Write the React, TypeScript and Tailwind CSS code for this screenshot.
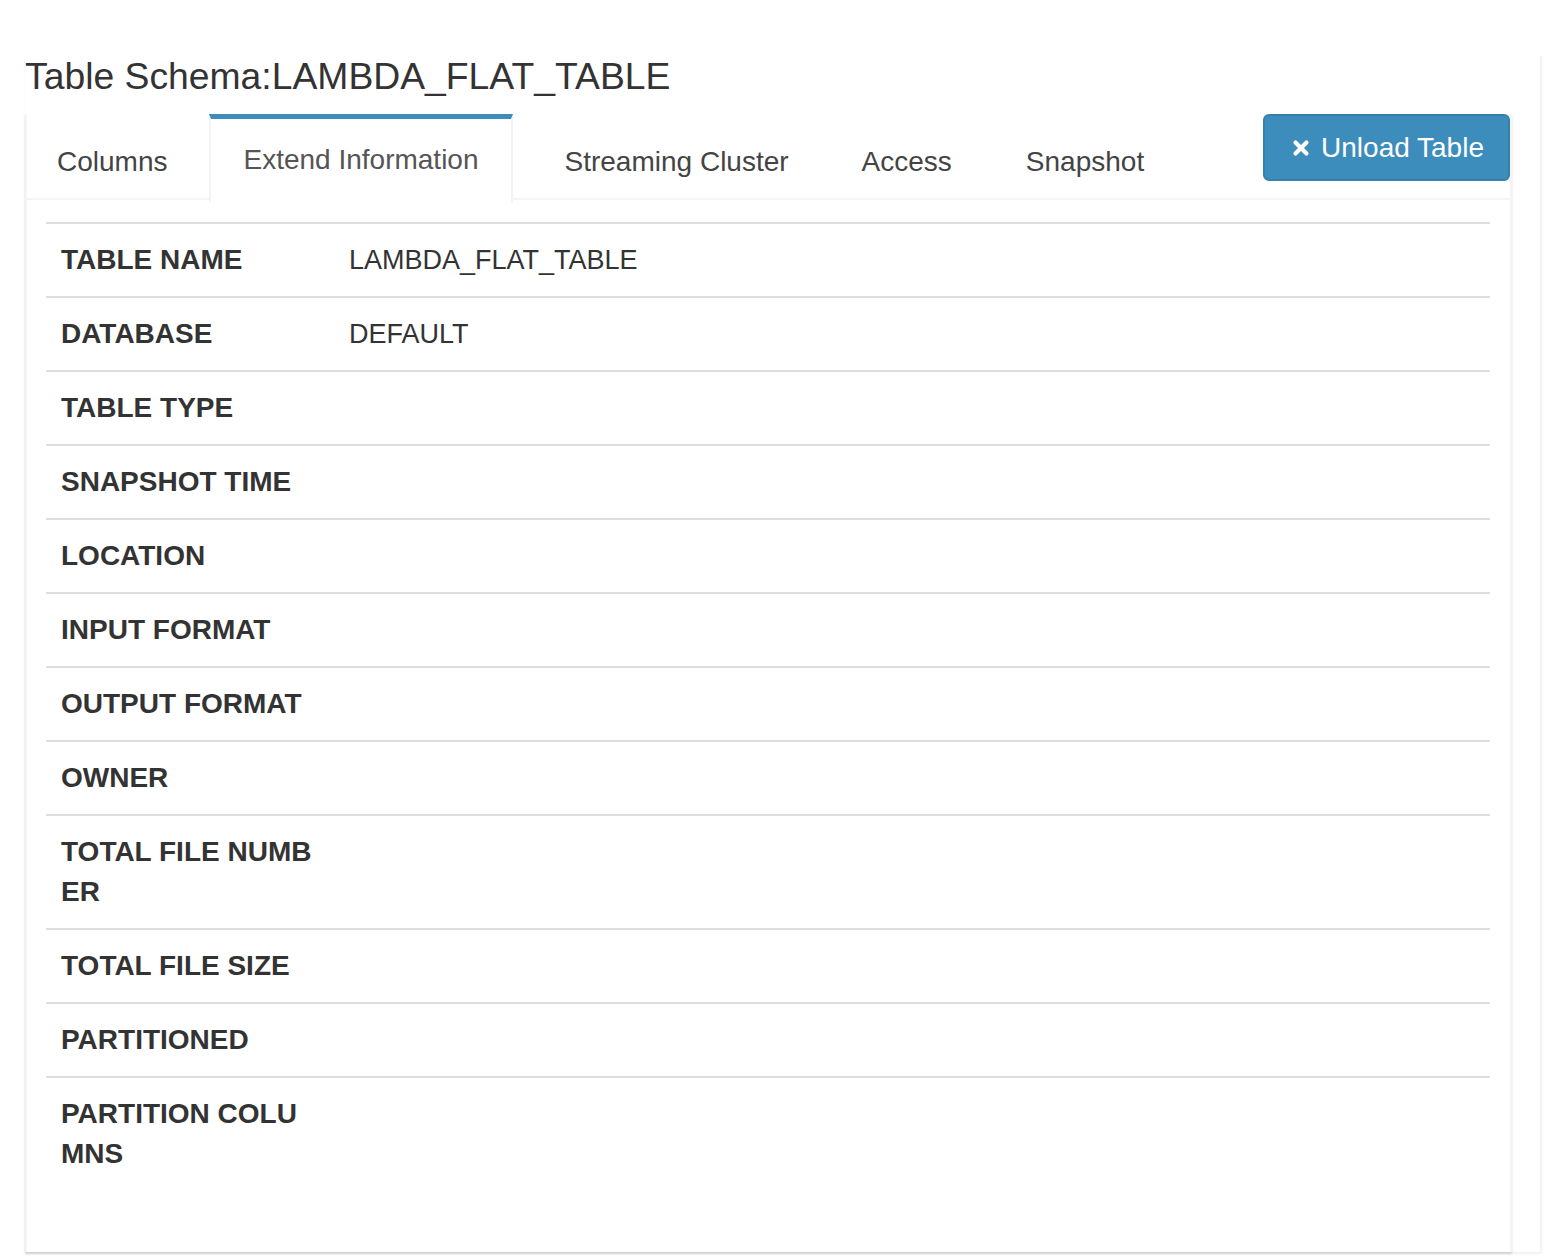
import React from 'react';

const tabs = ['Columns', 'Extend Information', 'Streaming Cluster', 'Access', 'Snapshot'];
const tabGap = ['mr-[12px]', 'mr-[22px]', 'mr-[13px]', 'mr-[14px]', 'mr-[14px]'];

const rows: { label: string; value?: string }[] = [
  { label: 'TABLE NAME', value: 'LAMBDA_FLAT_TABLE' },
  { label: 'DATABASE', value: 'DEFAULT' },
  { label: 'TABLE TYPE' },
  { label: 'SNAPSHOT TIME' },
  { label: 'LOCATION' },
  { label: 'INPUT FORMAT' },
  { label: 'OUTPUT FORMAT' },
  { label: 'OWNER' },
  { label: 'TOTAL FILE NUMBER' },
  { label: 'TOTAL FILE SIZE' },
  { label: 'PARTITIONED' },
  { label: 'PARTITION COLUMNS' },
];

const TimesIcon = () => (
  <svg width="18" height="18" viewBox="0 0 18 18" className="shrink-0">
    <path d="M3.5 3.5 L14.5 14.5 M14.5 3.5 L3.5 14.5" stroke="#fff" strokeWidth="4.2" strokeLinecap="round" />
  </svg>
);

export default function App() {
  const active = 1;

  return (
    <div className="min-h-[1257px] bg-white pt-[56px] font-['Liberation_Sans',Arial,sans-serif]">
      <div className="ml-[25px] w-[1517px] h-[1196px] flex flex-col border-r-2 border-[#f4f4f4] shadow-[0_2px_2px_rgba(0,0,0,0.06)]">
        <h3 className="text-[37.3px] leading-[40px] text-[#333] font-normal">Table Schema:LAMBDA_FLAT_TABLE</h3>

        <div className="mt-[18px] w-[1487px] flex-1 flex flex-col bg-white border-x-2 border-[#f4f4f4] shadow-[0_2px_2px_rgba(0,0,0,0.14)]">
          {/* tab bar */}
          <div className="flex h-[86px] border-b-2 border-[#f4f4f4]">
            <ul className="flex">
              {tabs.map((t, i) =>
                i === active ? (
                  <li key={t} className={`h-[88px] -mb-[2px] ${tabGap[i]} bg-white border-t-[5px] border-t-[#3c8dbc] border-x-2 border-x-[#f4f4f4] px-[32px] pt-[21px] text-[28px] leading-[40px] text-[#555]`}>
                    {t}
                  </li>
                ) : (
                  <li key={t} className={`mt-[4px] ${tabGap[i]} px-[30px] pt-[24px] text-[28px] leading-[40px] text-[#444]`}>
                    {t}
                  </li>
                )
              )}
            </ul>
            <button className="ml-auto h-[67px] flex items-center gap-[11px] pl-[27px] pr-[24px] rounded-[6px] bg-[#3c8dbc] border-2 border-[#367fa9] text-white text-[28px] leading-none">
              <TimesIcon />
              <span>Unload Table</span>
            </button>
          </div>

          {/* tab content */}
          <div className="pl-[19px] pr-[20px] pt-[22px]">
            <table className="w-full table-fixed border-collapse">
              <colgroup>
                <col className="w-[288px]" />
                <col />
              </colgroup>
              <tbody>
                {rows.map((r) => (
                  <tr key={r.label}>
                    <th className="border-t-2 border-[#ddd] px-[15px] py-[16px] text-left align-top font-bold text-[28px] leading-[40px] text-[#333] break-all">
                      {r.label}
                    </th>
                    <td className="border-t-2 border-[#ddd] px-[15px] py-[16px] align-top text-[27px] leading-[40px] text-[#333]">
                      {r.value ?? ''}
                    </td>
                  </tr>
                ))}
              </tbody>
            </table>
          </div>
        </div>
      </div>
    </div>
  );
}
